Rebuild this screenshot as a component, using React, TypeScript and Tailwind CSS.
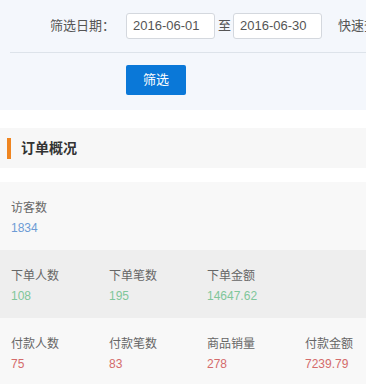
const font = { fontFamily: '"Liberation Sans", "Noto Sans CJK SC", sans-serif' };

const rows = [
  { bg: "bg-[#f8f8f8]", color: "text-[#6c9bd5]", items: [{ label: "访客数", value: "1834" }] },
  {
    bg: "bg-[#eeeeee]",
    color: "text-[#7fc69a]",
    items: [
      { label: "下单人数", value: "108" },
      { label: "下单笔数", value: "195" },
      { label: "下单金额", value: "14647.62" },
    ],
  },
  {
    bg: "bg-[#f8f8f8]",
    color: "text-[#d46b6b]",
    items: [
      { label: "付款人数", value: "75" },
      { label: "付款笔数", value: "83" },
      { label: "商品销量", value: "278" },
      { label: "付款金额", value: "7239.79" },
    ],
  },
];

export default function App() {
  return (
    <div className="w-[366px] h-[384px] overflow-hidden bg-white" style={font}>
      {/* Filter */}
      <div className="h-[110px] bg-[#f4f7fc] pt-[13px]">
        <div className="flex items-center whitespace-nowrap text-[13px] text-[#555]">
          <div className="w-[115px] shrink-0 text-right">筛选日期：</div>
          <div className="ml-[11px] w-[89px] h-[26px] shrink-0 flex items-center pl-[6px] bg-white border border-[#d4d8de] rounded-[3px] text-[#555]">
            2016-06-01
          </div>
          <span className="ml-[3px] mr-[2px] shrink-0">至</span>
          <div className="w-[89px] h-[26px] shrink-0 flex items-center pl-[6px] bg-white border border-[#d4d8de] rounded-[3px] text-[#555]">
            2016-06-30
          </div>
          <span className="ml-[16px] shrink-0">快速查看</span>
        </div>
        <div className="ml-[10px] mt-[13px] border-t border-[#dde3ea]" />
        <div className="pl-[126px] pt-[12px]">
          <button className="w-[60px] h-[30px] bg-[#0a78d8] rounded-[2px] text-white text-[13px]">筛选</button>
        </div>
      </div>

      {/* Title */}
      <div className="mt-[18px] h-[40px] bg-[#f7f7f7] flex items-center">
        <div className="ml-[7px] w-[4px] h-[21px] bg-[#ef8520]" />
        <div className="ml-[10px] text-[14px] font-bold text-[#333]">订单概况</div>
      </div>

      {/* Stats */}
      <div className="mt-[14px]">
        {rows.map((row, i) => (
          <div key={i} className={`h-[68px] ${row.bg} pt-[16px] pl-[11px] flex`}>
            {row.items.map((it) => (
              <div key={it.label} className="w-[98px] shrink-0 text-[12px] leading-[20px]">
                <div className="text-[#666]">{it.label}</div>
                <div className={row.color}>{it.value}</div>
              </div>
            ))}
          </div>
        ))}
      </div>
    </div>
  );
}
